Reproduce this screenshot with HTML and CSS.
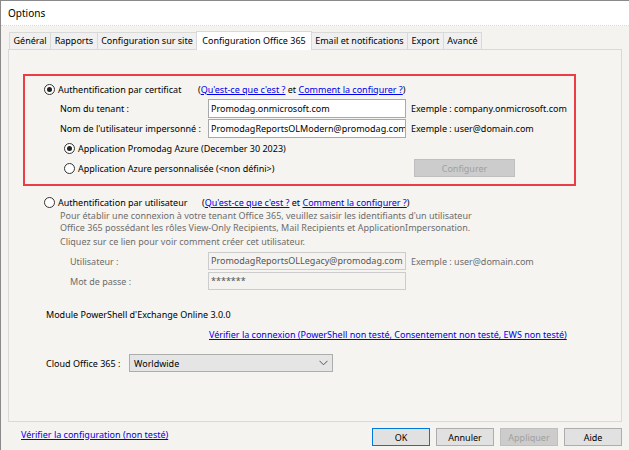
FILE: index.html
```html
<!DOCTYPE html>
<html lang="fr">
<head>
    <meta charset="UTF-8">
    <title>Options</title>
    <link rel="stylesheet" href="styles.css">
</head>
<body>
    <div class="window">
        <div class="titlebar">Options</div>

        <div class="client">
            <!-- onglets -->
            <div class="tabs">
                <div class="tab">Général</div>
                <div class="tab">Rapports</div>
                <div class="tab">Configuration sur site</div>
                <div class="tab active">Configuration Office 365</div>
                <div class="tab">Email et notifications</div>
                <div class="tab">Export</div>
                <div class="tab">Avancé</div>
            </div>

            <div class="panel">
                <!-- certificat -->
                <div class="cert-box">
                    <div class="radio-row head-cert">
                        <span class="radio-label"><span class="radio checked"></span>Authentification par certificat</span>
                        <span class="help">(<a href="#">Qu'est-ce que c'est ?</a> et <a href="#">Comment la configurer ?</a>)</span>
                    </div>
                    <div class="fields">
                        <span class="field-label">Nom du tenant :</span>
                        <div class="input">Promodag.onmicrosoft.com</div>
                        <span class="example">Exemple : company.onmicrosoft.com</span>

                        <span class="field-label">Nom de l'utilisateur impersonné :</span>
                        <div class="input">PromodagReportsOLModern@promodag.com</div>
                        <span class="example">Exemple : user@domain.com</span>
                    </div>
                    <div class="app-options">
                        <div class="radio-row sub">
                            <span class="radio-label"><span class="radio checked"></span>Application Promodag Azure (December 30 2023)</span>
                        </div>
                        <div class="radio-row sub">
                            <span class="radio-label wide"><span class="radio"></span>Application Azure personnalisée (&lt;non défini&gt;)</span>
                            <button class="btn configure" disabled>Configurer</button>
                        </div>
                    </div>
                </div>

                <!-- utilisateur -->
                <div class="user-section">
                    <div class="radio-row head-user">
                        <span class="radio-label"><span class="radio"></span>Authentification par utilisateur</span>
                        <span class="help">(<a href="#">Qu'est-ce que c'est ?</a> et <a href="#">Comment la configurer ?</a>)</span>
                    </div>
                    <p class="desc">Pour établir une connexion à votre tenant Office 365, veuillez saisir les identifiants d'un utilisateur<br>Office 365 possédant les rôles View-Only Recipients, Mail Recipients et ApplicationImpersonation.</p>
                    <p class="desc click">Cliquez sur ce lien pour voir comment créer cet utilisateur.</p>
                    <div class="fields user-fields">
                        <span class="field-label">Utilisateur :</span>
                        <div class="input disabled">PromodagReportsOLLegacy@promodag.com</div>
                        <span class="example">Exemple : user@domain.com</span>

                        <span class="field-label">Mot de passe :</span>
                        <div class="input disabled">*******</div>
                        <span></span>
                    </div>
                </div>

                <div class="module">Module PowerShell d'Exchange Online 3.0.0</div>
                <div class="check-link"><a href="#">Vérifier la connexion (PowerShell non testé, Consentement non testé, EWS non testé)</a></div>

                <div class="cloud-row">
                    <span class="cloud-label">Cloud Office 365 :</span>
                    <div class="select">
                        <span>Worldwide</span>
                        <svg width="9" height="6" viewBox="0 0 9 6"><polyline points="0.5,0.8 4.5,4.8 8.5,0.8" fill="none" stroke="#555" stroke-width="1"/></svg>
                    </div>
                </div>
            </div>

            <div class="footer">
                <a href="#" class="footer-link">Vérifier la configuration (non testé)</a>
                <div class="buttons">
                    <button class="btn default">OK</button>
                    <button class="btn">Annuler</button>
                    <button class="btn" disabled>Appliquer</button>
                    <button class="btn">Aide</button>
                </div>
            </div>
        </div>
    </div>
</body>
</html>
```

FILE: styles.css
```css
body {
    margin: 0;
    font-family: "Noto Sans", "Open Sans", sans-serif;
    font-size: 9px;
    color: #000;
    background-color: #f4f3ef;
    white-space: nowrap;
}

a {
    color: #0000ee;
    text-decoration: underline;
}

.window {
    width: 628px;
    height: 449px;
    border-left: 1px solid #8a8a8a;
    border-top: 1px solid #8a8a8a;
    overflow: hidden;
}

.titlebar {
    height: 24px;
    line-height: 24px;
    padding-left: 7px;
    font-size: 10px;
    background-color: #fff;
    border-bottom: 1px dotted #d8d8d8;
}

.client {
    padding: 6px 7px 0 7px;
}

/* onglets */
.tabs {
    display: flex;
    align-items: flex-end;
    height: 17px;
    padding-left: 1px;
}

.tab {
    height: 16px;
    line-height: 16px;
    padding: 0 3.5px;
    background-color: #f0f0f0;
    border: 1px solid #d9d9d9;
    border-bottom: none;
    margin-right: -1px;
}

.tab.active {
    height: 18px;
    line-height: 18px;
    padding: 0 5px;
    background-color: #fff;
    position: relative;
    z-index: 1;
    margin-bottom: -1px;
}

.panel {
    height: 371px;
    border: 1px solid #d9d9d9;
    background-color: #f5f4f0;
    padding: 0 0 0 14px;
}

/* boutons radio */
.radio-row {
    display: flex;
    align-items: center;
    height: 16px;
}

.radio-label {
    display: flex;
    align-items: center;
}

.radio {
    display: inline-block;
    box-sizing: border-box;
    width: 11px;
    height: 11px;
    border: 1px solid #333;
    border-radius: 50%;
    background-color: #fff;
    margin-right: 3px;
    position: relative;
}

.radio.checked::after {
    content: "";
    position: absolute;
    left: 2px;
    top: 2px;
    width: 5px;
    height: 5px;
    border-radius: 50%;
    background-color: #222;
}

/* certificat */
.cert-box {
    width: 549px;
    margin-top: 24px;
    border: 2px solid #ec3d47;
    padding: 5px 0 8px 0;
}

.head-cert {
    padding-left: 19px;
}

.head-cert .radio-label {
    width: 154px;
}

.fields {
    display: grid;
    grid-template-columns: 148px 198px auto;
    row-gap: 1px;
    align-items: center;
    margin-top: 2px;
    padding-left: 35px;
}

.input {
    box-sizing: border-box;
    height: 19px;
    line-height: 17px;
    padding-left: 2px;
    border: 1px solid #a9a9a9;
    background-color: #fff;
    overflow: hidden;
}

.example {
    padding-left: 5px;
}

.app-options {
    margin-top: 2px;
    padding-left: 39px;
}

.app-options .radio-row + .radio-row {
    margin-top: 4px;
}

.radio-label.wide {
    width: 350px;
}

.btn {
    font-family: inherit;
    font-size: 9px;
    box-sizing: border-box;
    width: 58px;
    height: 18px;
    padding: 0;
    background-color: #e1e1e1;
    border: 1px solid #adadad;
    color: #000;
}

.btn:disabled {
    background-color: #cccccc;
    border-color: #bfbfbf;
    color: #a0a0a0;
}

.btn.configure {
    width: 101px;
}

.btn.default {
    border-color: #0078d7;
}

/* utilisateur */
.user-section {
    margin-top: 8px;
}

.head-user {
    padding-left: 21px;
}

.head-user .radio-label {
    width: 158px;
}

.desc {
    margin: 0;
    padding-left: 37px;
    line-height: 12px;
    color: #6d6d6d;
}

.desc.click {
    margin-top: 2px;
}

.user-fields {
    margin-top: 4px;
    padding-left: 47px;
    grid-template-columns: 138px 198px auto;
    row-gap: 2px;
}

.user-fields .field-label,
.user-fields .example {
    color: #6d6d6d;
}

.input.disabled {
    height: 18px;
    line-height: 16px;
    background-color: #f4f3ef;
    border-color: #cccccc;
    color: #555;
}

.module {
    margin-top: 17px;
    padding-left: 23px;
    line-height: 16px;
}

.check-link {
    margin-top: 4px;
    padding-left: 186px;
    line-height: 16px;
}

.cloud-row {
    display: flex;
    align-items: center;
    margin-top: 11px;
    padding-left: 23px;
}

.cloud-label {
    width: 83px;
}

.select {
    box-sizing: border-box;
    width: 204px;
    height: 18px;
    display: flex;
    align-items: center;
    justify-content: space-between;
    padding: 0 4px 0 4px;
    background-color: #e5e5e5;
    border: 1px solid #adadad;
}

/* bas */
.footer {
    display: flex;
    justify-content: space-between;
    padding: 6px 0 0 13px;
}

.footer-link {
    line-height: 14px;
}

.buttons {
    display: flex;
    gap: 6px;
}
```
